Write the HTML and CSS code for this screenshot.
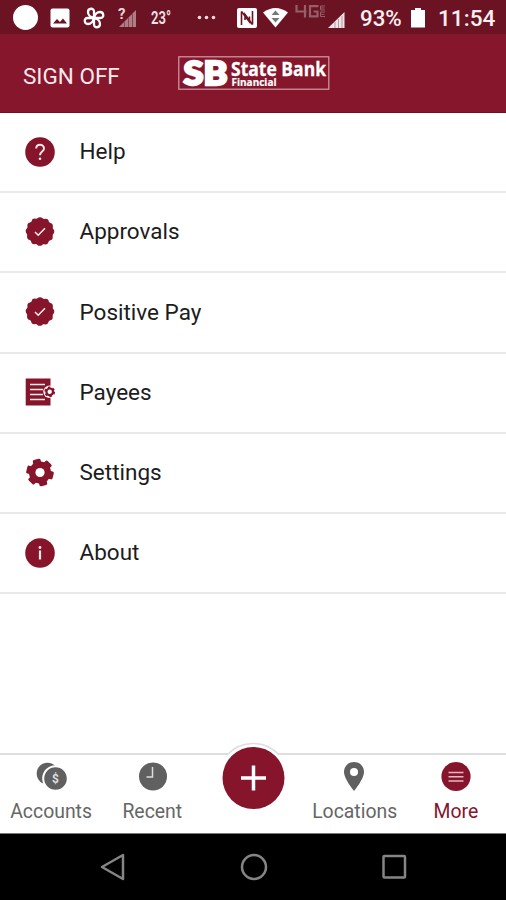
FILE: index.html
```html
<!DOCTYPE html>
<html lang="en">
<head>
<meta charset="utf-8">
<meta name="viewport" content="width=device-width">
<title>State Bank Financial</title>
<link rel="stylesheet" href="styles.css">
</head>
<body>
<div class="screen">
  <div class="status">
    <svg class="s-dot" width="26" height="26" viewBox="0 0 26 26"><circle cx="13.500" cy="12.500" r="12.500" fill="#fff"/></svg>
    <svg class="s-img" width="20" height="20" viewBox="0 0 20 20"><rect x=".5" y=".5" width="19" height="19" rx="2" fill="#fff"/><path d="M3 15.500l4-4.500 3 3 3-3.500 4 5z" fill="#6b1223"/></svg>
    <svg class="s-fan" width="22" height="22" viewBox="0 0 22 22" fill="none" stroke="#fff" stroke-width="2.300" stroke-linejoin="round"><path d="M11 11V4.500C11 .5 5 1 5 5S7.500 10 11 11z"/><path d="M11 11V4.500C11 .5 5 1 5 5S7.500 10 11 11z" transform="rotate(90 11 11)"/><path d="M11 11V4.500C11 .5 5 1 5 5S7.500 10 11 11z" transform="rotate(180 11 11)"/><path d="M11 11V4.500C11 .5 5 1 5 5S7.500 10 11 11z" transform="rotate(270 11 11)"/></svg>
    <svg class="s-sig" width="20" height="22" viewBox="0 0 20 22"><path d="M1 20L18 3V20z" fill="#b07c85"/><path d="M6.500 14v6M10.500 10v10M14.500 7v13" stroke="#8a4552"/><text x="0" y="11.500" font-size="15" font-weight="700" fill="#e8d6d9">?</text></svg>
    <svg class="s-temp" width="22" height="22" viewBox="0 0 22 22"><text x="0" y="17" font-size="18" font-weight="600" textLength="20" lengthAdjust="spacingAndGlyphs" fill="#f2e4e6">23°</text></svg>
    <svg class="s-more" width="20" height="6" viewBox="0 0 20 6" fill="#ecdcdf"><circle cx="2.500" cy="2.500" r="1.800"/><circle cx="9.500" cy="2.500" r="1.800"/><circle cx="16.500" cy="2.500" r="1.800"/></svg>
    <svg class="s-nfc" width="22" height="22" viewBox="0 0 22 22"><rect x="0" y="1" width="20" height="20" rx="2" fill="#fff"/><path d="M4.500 4.500V18M15.500 17.500V4" fill="none" stroke="#6b1223" stroke-width="1.600"/><path d="M4.500 4.500L12.500 15V9.500M15.500 17.500L8 7.500V13" fill="none" stroke="#6b1223" stroke-width="1.600"/></svg>
    <svg class="s-wifi" width="26" height="22" viewBox="0 0 26 22"><path d="M0 5.500Q12.500-3.500 25 5.500L12.500 20.500z" fill="#fff"/><path d="M12.500 3.500l4 4.500h-8zM12.500 15.500l4-4.500h-8z" fill="#777"/></svg>
    <svg class="s-4g" width="32" height="16" viewBox="0 0 32 16" fill="none" stroke="#94606a"><path d="M1.500 1v6.500h10M10 1v12.500M23.500 2.200h-8.500v10.200h7.500V7.500h-4" stroke-width="2.200"/><path d="M30 2h-4.500v4H30M25.500 4h4M30 8h-4.500v4.500H30M25.500 10.300h4" stroke-width="1"/></svg>
    <svg class="s-sig2" width="18" height="18" viewBox="0 0 18 18"><path d="M-1 16L15.500 0v16z" fill="#eee3e5"/><path d="M6 10v6M9.500 7v9M13 4v12" stroke="#b9959c"/></svg>
    <span class="pct">93%</span>
    <svg class="s-bat" width="16" height="20" viewBox="0 0 16 20"><path d="M5 0h6v2h4v17.500H1V2h4z" fill="#fff"/></svg>
    <span class="time">11:54</span>
  </div>
  <header class="bar">
    <span class="signoff">SIGN OFF</span>
    <svg class="logo" width="152" height="34" viewBox="0 0 152 34"><rect x=".8" y=".8" width="150" height="32.400" fill="none" stroke="#cf9fa8" stroke-width="1.200"/><g fill="#fff" stroke="#fff" font-weight="700"><text x="5.500" y="28.500" font-family="Lato" font-weight="900" font-size="32" stroke-width="2.400" textLength="44" lengthAdjust="spacingAndGlyphs">SB</text><text x="53" y="19.500" font-family="Open Sans" font-size="20" stroke-width=".3" textLength="95" lengthAdjust="spacingAndGlyphs">State Bank</text><text x="53.500" y="29.800" font-family="Open Sans" font-size="11" stroke-width=".2" textLength="45" lengthAdjust="spacingAndGlyphs">Financial</text></g></svg>
  </header>
  <main class="menu">
    <div class="row"><svg width="32" height="32" viewBox="-16 -16 32 32"><circle r="14.800" fill="#86142b"/><path d="M-3.800-3.500C-3.800-8.500 4-8.500 4-3.500 4-.5 0-.3 0 3.200" fill="none" stroke="#fbe9ec" stroke-width="1.900"/><circle cy="6.800" r="1.300" fill="#fbe9ec"/></svg><span>Help</span></div>
    <div class="row"><svg width="32" height="32" viewBox="-16 -15.500 32 32"><circle r="13.200" fill="#86142b"/><circle r="11.200" fill="none" stroke="#86142b" stroke-width="6.200" stroke-linecap="round" stroke-dasharray="0 5.864" transform="rotate(-90)"/><path d="M-5 .5l3.200 3.200L5-3.200" fill="none" stroke="#fbe9ec" stroke-width="1.600"/></svg><span>Approvals</span></div>
    <div class="row"><svg width="32" height="32" viewBox="-16 -15.500 32 32"><circle r="13.200" fill="#86142b"/><circle r="11.200" fill="none" stroke="#86142b" stroke-width="6.200" stroke-linecap="round" stroke-dasharray="0 5.864" transform="rotate(-90)"/><path d="M-5 .5l3.200 3.200L5-3.200" fill="none" stroke="#fbe9ec" stroke-width="1.600"/></svg><span>Positive Pay</span></div>
    <div class="row"><svg width="32" height="32" viewBox="-16 -15.500 32 32"><path d="M-14.300-14h24.800v27h-24.800z" fill="#86142b"/><path d="M-10-8H5M-10-3H3M-10 2H3M-10 7H5" stroke="#fbe9ec" stroke-width="1.500"/><circle cx="9.500" cy="-.7" r="6.200" fill="#fff"/><circle cx="9.700" cy="-.7" r="3.300" fill="none" stroke="#86142b" stroke-width="2.200"/><circle cx="9.700" cy="-.7" r="4.500" fill="none" stroke="#86142b" stroke-width="1.800" stroke-dasharray="2.500 2.212"/></svg><span>Payees</span></div>
    <div class="row"><svg width="32" height="32" viewBox="-16 -15.500 32 32"><g fill="#86142b"><circle r="11"/><rect x="-13.600" y="-4" width="27.200" height="8" rx="1.500" transform="rotate(14)"/><rect x="-13.600" y="-4" width="27.200" height="8" rx="1.500" transform="rotate(74)"/><rect x="-13.600" y="-4" width="27.200" height="8" rx="1.500" transform="rotate(134)"/></g><circle r="4.600" fill="#fff"/></svg><span>Settings</span></div>
    <div class="row"><svg width="32" height="32" viewBox="-16 -16 32 32"><circle r="14.800" fill="#86142b"/><circle cy="-5.500" r="1.400" fill="#fbe9ec"/><path d="M0-2.500V6.500" stroke="#fbe9ec" stroke-width="2.200"/></svg><span>About</span></div>
  </main>
  <nav class="tabs">
    <div class="tab"><svg width="34" height="32" viewBox="0 0 34 32"><circle cx="13.500" cy="12.500" r="10.800" fill="#606060"/><circle cx="21.500" cy="17.500" r="12.300" fill="#606060" stroke="#fff" stroke-width="2"/><text x="21.500" y="21.800" text-anchor="middle" font-size="12" font-weight="700" fill="#ddd">$</text></svg><span>Accounts</span></div>
    <div class="tab"><svg width="32" height="32" viewBox="0 0 32 32"><circle cx="17" cy="15.500" r="14" fill="#606060"/><path d="M16.500 6v10H10.500" fill="none" stroke="#ddd" stroke-width="1.500"/></svg><span>Recent</span></div>
    <div class="tab add"><svg class="fab" width="74" height="74" viewBox="-37 -37 74 74"><path d="M-26-23A35 35 0 0 1 26-23z" fill="#fff"/><path d="M-26-23A35 35 0 0 1 26-23" fill="none" stroke="#ddd" stroke-width="1.500"/><circle cx=".5" r="31" fill="#86142b"/><path d="M-12 0h25M.5-12.500v25" stroke="#fff" stroke-width="3.500"/></svg></div>
    <div class="tab"><svg width="32" height="32" viewBox="0 0 32 32"><path d="M16 1C9.500 1 6 6 6 11c0 7 10 19 10 19s10-12 10-19C26 6 22.500 1 16 1z" fill="#606060"/><circle cx="16" cy="11" r="4" fill="#fff"/></svg><span>Locations</span></div>
    <div class="tab active"><svg width="32" height="32" viewBox="0 0 32 32"><circle cx="17" cy="15.500" r="14.600" fill="#86142b"/><path d="M9.500 11.500h15M9.500 15.700h15M9.500 20h15" stroke="#e5b9c1" stroke-width="1.600"/></svg><span>More</span></div>
  </nav>
  <footer class="system">
    <svg width="28" height="30" viewBox="0 0 28 30"><path d="M24 3v24L3 15z"/></svg>
    <svg width="28" height="30" viewBox="0 0 28 30"><circle cx="14" cy="15" r="12"/></svg>
    <svg width="28" height="30" viewBox="0 0 28 30"><rect x="3.500" y="4" width="21.500" height="21.500" rx="1"/></svg>
  </footer>
</div>
</body>
</html>
```
FILE: styles.css
```css
* { box-sizing: border-box; }
body { margin: 0; font-family: Roboto, "Liberation Sans", sans-serif; background: #fff; }
svg { display: block; flex: none; overflow: visible; }
.screen { width: 506px; height: 900px; display: flex; flex-direction: column; overflow: hidden; }

.status { height: 34px; flex: none; display: flex; align-items: center; padding: 2px 0 0 12px; background: #6b1223; color: #fbeff1; font-size: 22.6px; font-weight: 500; white-space: nowrap; }
.s-img { margin-left: 12px; }
.s-fan { margin-left: 13px; }
.s-sig { margin-left: 13px; }
.s-temp { margin-left: 13px; }
.s-more { margin-left: 24px; }
.s-nfc { margin-left: 20px; }
.s-wifi { margin-left: 4px; }
.s-4g { margin: -12px 0 0 6px; }
.s-sig2 { margin: 5px 0 0 2px; }
.pct { width: 51px; margin-left: 13px; font-size: 22.3px; }
.s-bat { margin-left: -1px; }
.time { margin-left: 12px; }

.bar { height: 79px; flex: none; display: flex; align-items: flex-start; background: #86162c; border-bottom: 1px solid #6d1020; }
.signoff { width: 155px; margin: 28px 0 0 23px; font-size: 22.5px; line-height: 28px; color: #fbe9ec; }
.logo { margin-top: 22px; }

.menu { flex: 1; }
.row { height: 80.2px; display: flex; align-items: center; gap: 23.5px; padding-left: 24px; border-bottom: 2px solid #e9e9e9; font-size: 22.5px; color: #1c1c1c; }
.row span { margin-bottom: 1.6px; }

.tabs { height: 80px; flex: none; display: grid; grid-template-columns: repeat(5, 1fr); border-top: 2px solid #dedede; background: #fff; }
.tab { display: flex; flex-direction: column; align-items: center; padding-top: 6px; font-size: 19.4px; line-height: 26px; color: #666; }
.tab span { margin: 6px 0 0 1px; }
.active { color: #86142b; }
.add { padding: 0; }
.fab { margin-top: -14px; }

.system { height: 67px; flex: none; display: flex; justify-content: space-between; align-items: center; padding: 0 98px 0 99px; background: #000; border-top: 1px solid #777; }
.system svg { fill: none; stroke: #858585; stroke-width: 2.5; stroke-linejoin: round; }
```
